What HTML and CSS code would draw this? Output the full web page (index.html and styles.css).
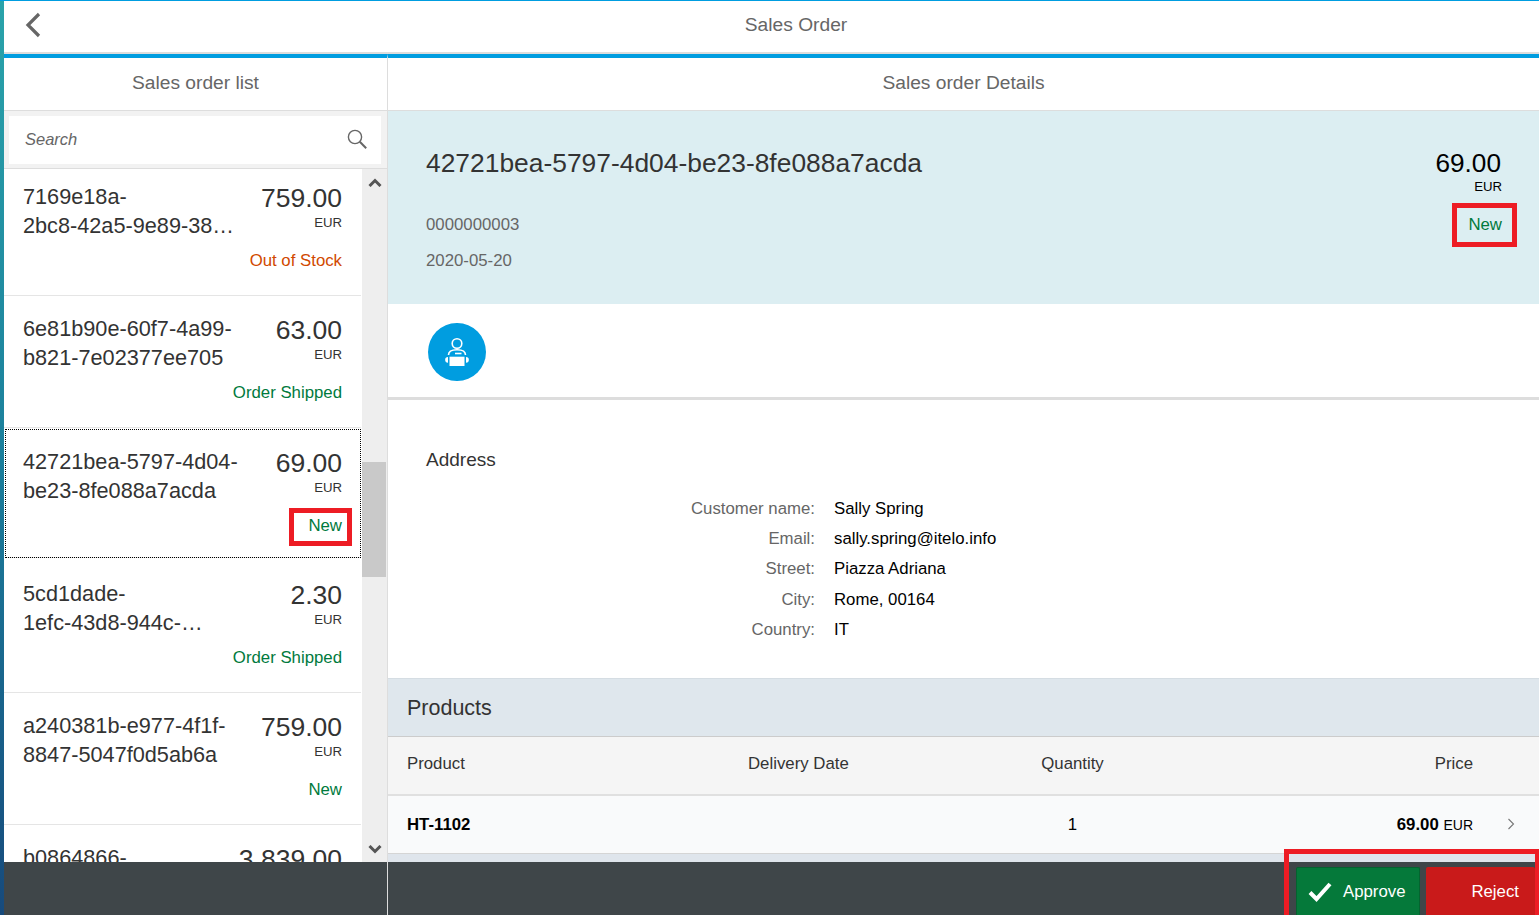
FILE: index.html
```html
<!DOCTYPE html>
<html lang="en">
<head>
    <meta charset="UTF-8">
    <title>Sales Order</title>
    <link rel="stylesheet" href="styles.css">
</head>
<body>
    <div class="app">
        <div class="strip"></div>
        <div class="shell">
            <header class="topbar">
                <svg class="back-icon" width="16" height="26" viewBox="0 0 16 26"><path d="M14 2 L3 13 L14 24" fill="none" stroke="#666" stroke-width="3.2"/></svg>
                <div class="topbar-title">Sales Order</div>
            </header>

            <div class="panes">
                <section class="master">
                    <div class="pane-head">Sales order list</div>
                    <div class="search-wrap">
                        <div class="search-box">
                            <span class="search-text">Search</span>
                            <svg width="20" height="20" viewBox="0 0 20 20"><circle cx="8" cy="8" r="6.6" fill="none" stroke="#666" stroke-width="1.4"/><path d="M12.8 12.8 L19.2 19.2" stroke="#666" stroke-width="2"/></svg>
                        </div>
                    </div>
                    <div class="list-wrap">
                        <ul class="so-list">
                            <li class="so-item first">
                                <div class="so-top">
                                    <div class="so-id">7169e18a-<br>2bc8-42a5-9e89-38…</div>
                                    <div class="so-price"><div class="amount">759.00</div><div class="cur">EUR</div></div>
                                </div>
                                <div class="so-status red">Out of Stock</div>
                            </li>
                            <li class="so-item">
                                <div class="so-top">
                                    <div class="so-id">6e81b90e-60f7-4a99-<br>b821-7e02377ee705</div>
                                    <div class="so-price"><div class="amount">63.00</div><div class="cur">EUR</div></div>
                                </div>
                                <div class="so-status green">Order Shipped</div>
                            </li>
                            <li class="so-item focused">
                                <div class="so-top">
                                    <div class="so-id">42721bea-5797-4d04-<br>be23-8fe088a7acda</div>
                                    <div class="so-price"><div class="amount">69.00</div><div class="cur">EUR</div></div>
                                </div>
                                <div class="so-status green"><span class="marked list-mark">New</span></div>
                            </li>
                            <li class="so-item">
                                <div class="so-top">
                                    <div class="so-id">5cd1dade-<br>1efc-43d8-944c-…</div>
                                    <div class="so-price"><div class="amount">2.30</div><div class="cur">EUR</div></div>
                                </div>
                                <div class="so-status green">Order Shipped</div>
                            </li>
                            <li class="so-item">
                                <div class="so-top">
                                    <div class="so-id">a240381b-e977-4f1f-<br>8847-5047f0d5ab6a</div>
                                    <div class="so-price"><div class="amount">759.00</div><div class="cur">EUR</div></div>
                                </div>
                                <div class="so-status green">New</div>
                            </li>
                            <li class="so-item">
                                <div class="so-top">
                                    <div class="so-id">b0864866-<br>4a1c-4e7d-8f21-…</div>
                                    <div class="so-price"><div class="amount">3,839.00</div><div class="cur">EUR</div></div>
                                </div>
                                <div class="so-status green">New</div>
                            </li>
                        </ul>
                        <div class="scrollbar">
                            <svg class="arrow-up" width="14" height="9" viewBox="0 0 14 9"><path d="M1.5 8 L7 2.5 L12.5 8" fill="none" stroke="#555" stroke-width="3"/></svg>
                            <div class="thumb"></div>
                            <svg class="arrow-down" width="14" height="9" viewBox="0 0 14 9"><path d="M1.5 1 L7 6.5 L12.5 1" fill="none" stroke="#555" stroke-width="3"/></svg>
                        </div>
                    </div>
                </section>

                <section class="detail">
                    <div class="pane-head">Sales order Details</div>

                    <div class="obj-head">
                        <div class="obj-row">
                            <h1 class="obj-title">42721bea-5797-4d04-be23-8fe088a7acda</h1>
                            <div class="obj-price"><div class="obj-amount">69.00</div><div class="obj-cur">EUR</div></div>
                        </div>
                        <div class="obj-row obj-row-num">
                            <div class="obj-attr">0000000003</div>
                            <div class="obj-status"><span class="marked head-mark">New</span></div>
                        </div>
                        <div class="obj-attr obj-date">2020-05-20</div>
                    </div>

                    <div class="tab-bar">
                        <div class="tab-circle">
                            <svg width="30" height="30" viewBox="0 0 30 30">
                                <circle cx="15" cy="6.500" r="4.800" fill="none" stroke="#fff" stroke-width="1.600"/>
                                <path d="M6.500 18 C6.500 13.500 10 12.800 15 12.800 C20 12.800 23.500 13.500 23.500 18" fill="none" stroke="#fff" stroke-width="1.600"/>
                                <rect x="7.500" y="19.700" width="15" height="9.300" fill="#fff"/>
                                <rect x="13" y="15.700" width="6.500" height="1.600" fill="#fff"/>
                                <path d="M6 20 A2.800 2.800 0 0 0 6 25.700 Z M24 20 A2.800 2.800 0 0 1 24 25.700 Z" fill="#fff"/>
                            </svg>
                        </div>
                    </div>

                    <div class="address">
                        <h2 class="address-title">Address</h2>
                        <dl class="address-form">
                            <dt>Customer name:</dt><dd>Sally Spring</dd>
                            <dt>Email:</dt><dd>sally.spring@itelo.info</dd>
                            <dt>Street:</dt><dd>Piazza Adriana</dd>
                            <dt>City:</dt><dd>Rome, 00164</dd>
                            <dt>Country:</dt><dd>IT</dd>
                        </dl>
                    </div>

                    <div class="products-bar">Products</div>
                    <table class="products">
                        <thead>
                            <tr>
                                <th class="col-product">Product</th>
                                <th class="col-date">Delivery Date</th>
                                <th class="col-qty">Quantity</th>
                                <th class="col-price">Price</th>
                                <th class="col-nav"></th>
                            </tr>
                        </thead>
                        <tbody>
                            <tr>
                                <td class="col-product"><b>HT-1102</b></td>
                                <td class="col-date"></td>
                                <td class="col-qty">1</td>
                                <td class="col-price"><b>69.00</b> <span class="row-cur">EUR</span></td>
                                <td class="col-nav"><svg width="8" height="12" viewBox="0 0 8 12"><path d="M1.500 1 L6.500 6 L1.500 11" fill="none" stroke="#777" stroke-width="1.100"/></svg></td>
                            </tr>
                        </tbody>
                    </table>
                    <div class="products-end"></div>
                </section>
            </div>

            <footer class="footer">
                <div class="footer-left"></div>
                <div class="footer-right">
                    <button class="btn btn-approve">
                        <svg width="24" height="20" viewBox="0 0 24 20"><path d="M2 10.500 L8.500 17 L22 2" fill="none" stroke="#fff" stroke-width="4"/></svg>
                        Approve
                    </button>
                    <button class="btn btn-reject">Reject</button>
                </div>
                <div class="footer-mark"></div>
            </footer>
        </div>
    </div>
</body>
</html>
```

FILE: styles.css
```css
* {
    box-sizing: border-box;
}

html, body {
    margin: 0;
    padding: 0;
    height: 100%;
    overflow: hidden;
}

body {
    font-family: "Liberation Sans", Arial, sans-serif;
    color: #333;
    background-color: #fff;
}

.app {
    display: flex;
    height: 915px;
    border-top: 1px solid #009de0;
}

.strip {
    width: 4px;
    flex: none;
    background: linear-gradient(to bottom, #2aa3aa, #1b7f9c 50%, #174a7c);
}

.shell {
    flex: 1;
    min-width: 0;
    display: flex;
    flex-direction: column;
}

/* top bar */
.topbar {
    height: 53px;
    flex: none;
    display: flex;
    align-items: center;
    padding: 0 0 4px 21px;
    border-bottom: 2px solid #ddd;
}

.topbar-title {
    flex: 1;
    text-align: center;
    font-size: 19.200px;
    color: #666;
    padding-left: 12px;
}

.panes {
    flex: 1;
    min-height: 0;
    display: flex;
}

.master {
    width: 384px;
    flex: none;
    display: flex;
    flex-direction: column;
    border-top: 4px solid #009de0;
    border-right: 1px solid #ddd;
}

.detail {
    flex: 1;
    min-width: 0;
    overflow: hidden;
    border-top: 4px solid #009de0;
}

.pane-head {
    height: 53px;
    line-height: 50px;
    text-align: center;
    font-size: 19.200px;
    color: #666;
    border-bottom: 1px solid #ddd;
}

/* search */
.search-wrap {
    height: 58px;
    flex: none;
    padding: 5px 6px 4px 5px;
    background-color: #f2f2f2;
    border-bottom: 1px solid #ddd;
}

.search-box {
    height: 48px;
    background-color: #fff;
    display: flex;
    align-items: center;
    justify-content: space-between;
    padding: 0 14px 2px 16px;
}

.search-text {
    font-size: 16.500px;
    font-style: italic;
    color: #666;
}

/* list */
.list-wrap {
    flex: 1;
    min-height: 0;
    display: flex;
    overflow: hidden;
}

.so-list {
    list-style: none;
    margin: 0;
    padding: 0;
    width: 357px;
    flex: none;
}

.so-item {
    height: 132.300px;
    padding: 19px 19px 0 19px;
    border-bottom: 1px solid #e5e5e5;
}

.so-item.first {
    height: 127px;
    padding-top: 14px;
}

.so-item.focused {
    height: 129px;
    margin: 1px 0 2.300px 1px;
    padding-left: 18px;
    outline: 1px dotted #000;
    outline-offset: -1px;
}

.so-top {
    display: flex;
    justify-content: space-between;
}

.so-id {
    font-size: 21.700px;
    line-height: 29px;
    margin-top: -1px;
    white-space: nowrap;
}

.amount {
    font-size: 26.500px;
    line-height: 30px;
    text-align: right;
}

.cur {
    font-size: 13.200px;
    line-height: 20px;
    text-align: right;
}

.so-status {
    font-size: 16.800px;
    line-height: 20px;
    text-align: right;
    margin-top: 11px;
}

.red {
    color: #d14900;
}

.green {
    color: #007a3d;
}

.marked {
    position: relative;
    display: inline-block;
}

.marked::after {
    content: "";
    position: absolute;
    border: 5px solid #ed1c24;
}

.list-mark::after {
    top: -8px;
    bottom: -10px;
    left: -19px;
    right: -10px;
}

.head-mark::after {
    top: -12px;
    bottom: -12px;
    left: -16px;
    right: -15px;
}

.scrollbar {
    width: 25px;
    flex: none;
    margin-left: 1px;
    background-color: #eee;
    display: flex;
    flex-direction: column;
    align-items: center;
}

.arrow-up {
    margin-top: 9px;
}

.thumb {
    width: 24px;
    height: 115px;
    background-color: #c9c9c9;
    margin-top: 275px;
    align-self: flex-start;
}

.arrow-down {
    margin-top: auto;
    margin-bottom: 8px;
}

/* object header */
.obj-head {
    height: 193px;
    background-color: #dceef2;
    padding: 36px 38px 0 38px;
}

.obj-row {
    display: flex;
    justify-content: space-between;
}

.obj-title {
    margin: 0;
    font-size: 26.400px;
    font-weight: normal;
    line-height: 32px;
}

.obj-amount {
    font-size: 26.200px;
    color: #000;
    line-height: 32px;
    text-align: right;
}

.obj-cur {
    font-size: 13.200px;
    color: #000;
    line-height: 16px;
    text-align: right;
    margin-right: -1px;
}

.obj-row-num {
    margin-top: 20px;
}

.obj-attr {
    font-size: 16.800px;
    color: #666;
    line-height: 20px;
}

.obj-date {
    margin-top: 16px;
}

.obj-status {
    font-size: 16.800px;
    line-height: 20px;
    color: #007a3d;
    margin-right: -1px;
}

/* icon tab */
.tab-bar {
    height: 96px;
    padding: 19px 0 0 40px;
    border-bottom: 3px solid #ddd;
}

.tab-circle {
    width: 57.500px;
    height: 58px;
    border-radius: 50%;
    background-color: #009de0;
    display: flex;
    align-items: center;
    justify-content: center;
}

/* address */
.address {
    height: 278px;
    padding: 49px 0 0 38px;
}

.address-title {
    margin: 0;
    font-size: 19px;
    font-weight: normal;
    line-height: 22px;
}

.address-form {
    display: grid;
    grid-template-columns: 389px 1fr;
    column-gap: 19px;
    row-gap: 10px;
    margin: 28px 0 0 0;
    font-size: 16.800px;
    line-height: 20.200px;
}

.address-form dt {
    color: #666;
    text-align: right;
}

.address-form dd {
    margin: 0;
    color: #000;
}

/* products */
.products-bar {
    height: 59px;
    line-height: 58px;
    padding-left: 19px;
    font-size: 21.500px;
    color: #333;
    background-color: #dfe7ed;
    border-top: 1px solid #d5dde3;
    border-bottom: 1px solid #ccc;
}

.products {
    width: 100%;
    border-collapse: collapse;
    table-layout: fixed;
    font-size: 16.800px;
    border-bottom: 1px solid #d5d5d5;
}

.products th {
    height: 58px;
    padding-bottom: 4px;
    font-weight: normal;
    color: #333;
    background-color: #f5f5f5;
    border-bottom: 2px solid #e0e0e0;
}

.products td {
    height: 58px;
    padding-top: 2px;
    color: #000;
    background-color: #f9fafb;
}

.products-end {
    height: 20px;
    background-color: #dfe5ec;
}

.col-product {
    width: 359px;
    padding-left: 19px;
    text-align: left;
}

.col-date {
    width: 221px;
    text-align: left;
}

.col-qty {
    width: 209px;
    text-align: center;
}

.col-price {
    text-align: right;
}

.col-nav {
    width: 65px;
    padding-left: 33px;
    text-align: left;
}

.row-cur {
    font-size: 14px;
}

/* footer */
.footer {
    height: 53px;
    flex: none;
    display: flex;
    position: relative;
    background-color: #3f4649;
}

.footer-left {
    width: 384px;
    border-right: 1px solid #ddd;
    flex: none;
}

.footer-right {
    flex: 1;
    display: flex;
    justify-content: flex-end;
    align-items: flex-end;
    padding-right: 4px;
    gap: 6px;
}

.btn {
    height: 48px;
    border: 1px solid transparent;
    border-bottom: none;
    border-radius: 2px 2px 0 0;
    color: #fff;
    font-family: inherit;
    font-size: 16.800px;
    display: flex;
    align-items: center;
}

.btn-approve {
    width: 124px;
    background-color: #05793a;
    border-color: #04632f;
    padding: 0 0 0 11px;
    gap: 11px;
}

.btn-reject {
    width: 109px;
    background-color: #c91a1a;
    justify-content: flex-end;
    padding: 0 15px 0 0;
}

.footer-mark {
    position: absolute;
    top: -13px;
    right: 0;
    bottom: 0;
    width: 255px;
    border: 5px solid #ed1c24;
    border-bottom: none;
    border-right-width: 4px;
}
```
